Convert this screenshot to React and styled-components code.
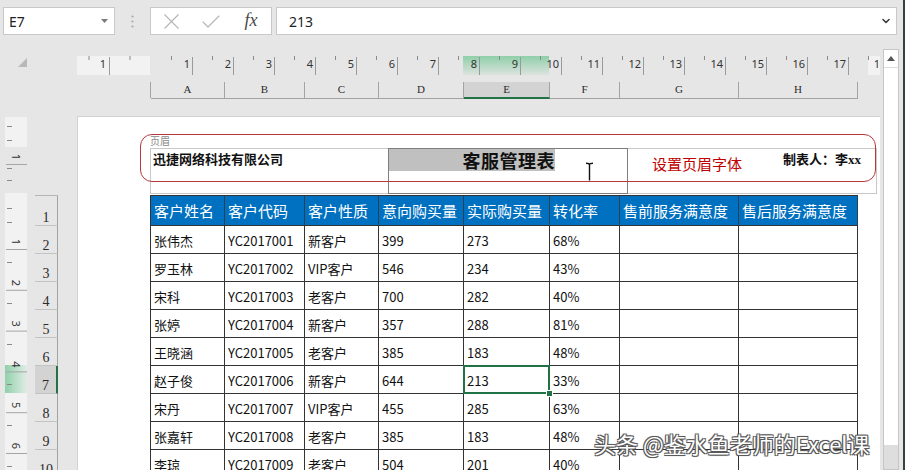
import React from "react";
import styled, { createGlobalStyle } from "styled-components";
import { X, Check, ChevronDown } from "lucide-react";

const COLS = "74px 80px 74px 85px 86px 70px 119px 119px";
const LETTERS = ["A", "B", "C", "D", "E", "F", "G", "H"];
const HEADERS = ["客户姓名", "客户代码", "客户性质", "意向购买量", "实际购买量", "转化率", "售前服务满意度", "售后服务满意度"];
const ROWS = [
    ["张伟杰", "YC2017001", "新客户", "399", "273", "68%"],
    ["罗玉林", "YC2017002", "VIP客户", "546", "234", "43%"],
    ["宋科", "YC2017003", "老客户", "700", "282", "40%"],
    ["张婷", "YC2017004", "新客户", "357", "288", "81%"],
    ["王晓涵", "YC2017005", "老客户", "385", "183", "48%"],
    ["赵子俊", "YC2017006", "新客户", "644", "213", "33%"],
    ["宋丹", "YC2017007", "VIP客户", "455", "285", "63%"],
    ["张嘉轩", "YC2017008", "老客户", "385", "183", "48%"],
    ["李琼", "YC2017009", "老客户", "504", "201", "40%"],
];

function HorizontalRuler() {
    const full = [];
    for (let n = 1; n <= 17; n++) full.push({ n, x: 74 + 41 * n });
    const half = [12, 53];
    for (let n = 1; n <= 18; n++) half.push(74 + 41 * n - 20.5);

    return (
        <RulerSvg width="803" height="19" viewBox="0 0 803 19">
            <defs>
                <linearGradient id="colSel" x1="0" y1="0" x2="0" y2="1">
                    <stop offset="0" stopColor="#7fcb9e" stopOpacity="0.85" />
                    <stop offset="1" stopColor="#7fcb9e" stopOpacity="0.1" />
                </linearGradient>
            </defs>
            <rect x="0" y="0" width="73" height="19" fill="#f2f2f2" />
            <rect x="791" y="0" width="12" height="19" fill="#f2f2f2" />
            <rect x="386" y="0" width="86" height="19" fill="url(#colSel)" />
            {half.map((x) => (
                <line key={x} x1={x} y1="0" x2={x} y2="4" stroke="#8a8a8a" />
            ))}
            <line x1="32.5" y1="1" x2="32.5" y2="19" stroke="#9a9a9a" />
            <text x="29" y="12" textAnchor="end" fontSize="11" fill="#333">1</text>
            {full.map(({ n, x }) => (
                <g key={n}>
                    <line x1={x + 0.5} y1="1" x2={x + 0.5} y2="19" stroke="#9a9a9a" />
                    <text x={x - 2} y="12" textAnchor="end" fontSize="11" fill="#333">{n}</text>
                </g>
            ))}
            <text x="803" y="12" textAnchor="end" fontSize="11" fill="#333">1</text>
        </RulerSvg>
    );
}

function VerticalRuler() {
    const labels = [];
    for (let n = 1; n <= 6; n++) labels.push({ n, y: 126 + 40.8 * (n - 1) });
    const half = [];
    for (let y = 146; y < 354; y += 40.8) half.push(Math.round(y));

    return (
        <RulerSvg width="22" height="354" viewBox="0 0 22 354">
            <defs>
                <linearGradient id="rowSel" x1="0" y1="0" x2="1" y2="0">
                    <stop offset="0" stopColor="#7fcb9e" stopOpacity="0.85" />
                    <stop offset="1" stopColor="#7fcb9e" stopOpacity="0.15" />
                </linearGradient>
            </defs>
            <rect x="0" y="1" width="22" height="30" fill="#f2f2f2" />
            <rect x="0" y="77" width="22" height="277" fill="#f2f2f2" />
            <rect x="0" y="249" width="22" height="28" fill="url(#rowSel)" />
            {[10, 24, 52, 64, 92, 106].concat(half).map((y) => (
                <line key={y} x1="2" y1={y + 0.5} x2="7" y2={y + 0.5} stroke="#8a8a8a" />
            ))}
            <line x1="1" y1="48.5" x2="22" y2="48.5" stroke="#a5a5a5" />
            <text transform="translate(11 41) rotate(90)" textAnchor="middle" dominantBaseline="central" fontSize="11" fill="#333">1</text>
            {labels.map(({ n, y }) => (
                <g key={n}>
                    <line x1="1" y1={y + 7.5} x2="22" y2={y + 7.5} stroke="#a5a5a5" />
                    <text transform={`translate(11 ${y}) rotate(90)`} textAnchor="middle" dominantBaseline="central" fontSize="11" fill="#333">{n}</text>
                </g>
            ))}
        </RulerSvg>
    );
}

export default function App() {
    return (
        <>
            <GlobalStyle />
            <Window>
                <FormulaBar>
                    <NameBox>
                        <span>E7</span>
                        <SmallIcon width="7" height="4" viewBox="0 0 7 4">
                            <path d="M0 0h7L3.5 4z" fill="#7a7a7a" />
                        </SmallIcon>
                    </NameBox>
                    <Grip>
                        <SmallIcon width="3" height="13" viewBox="0 0 3 13">
                            <circle cx="1.5" cy="1.5" r="1.1" fill="#a8a8a8" />
                            <circle cx="1.5" cy="6.5" r="1.1" fill="#a8a8a8" />
                            <circle cx="1.5" cy="11.5" r="1.1" fill="#a8a8a8" />
                        </SmallIcon>
                    </Grip>
                    <FxGroup>
                        <X size={27} strokeWidth={0.95} color="#b4b4b4" />
                        <Check size={24} strokeWidth={1.1} color="#b4b4b4" />
                        <FxLabel>fx</FxLabel>
                    </FxGroup>
                    <FormulaInput>
                        <span>213</span>
                        <ChevronDown size={12} strokeWidth={3.2} color="#3a3a3a" />
                    </FormulaInput>
                </FormulaBar>

                <Workspace>
                    <Sheet>
                        <TopArea>
                            <Corner>
                                <SmallIcon width="9" height="9" viewBox="0 0 9 9">
                                    <path d="M9 0V9H0z" fill="#b8b8b8" />
                                </SmallIcon>
                            </Corner>
                            <RulerColumn>
                                <HorizontalRuler />
                                <ColumnHeads>
                                    {LETTERS.map((l) => (
                                        <ColumnHead key={l} $active={l === "E"}>{l}</ColumnHead>
                                    ))}
                                </ColumnHeads>
                            </RulerColumn>
                        </TopArea>

                        <Body>
                            <Gutter>
                                <VerticalRuler />
                                <RowHeads>
                                    {Array.from({ length: 10 }, (_, i) => i + 1).map((n) => (
                                        <RowHead key={n} $first={n === 1} $active={n === 7}>{n}</RowHead>
                                    ))}
                                </RowHeads>
                            </Gutter>

                            <Page>
                                <HeaderTag>页眉</HeaderTag>
                                <HeaderBand>
                                    <HeaderLeft>迅捷网络科技有限公司</HeaderLeft>
                                    <HeaderCenter>
                                        <Selection>客服管理表</Selection>
                                        <IBeam width="9" height="20" viewBox="0 0 9 20">
                                            <path d="M1 1.2C3 1.2 4.5 1.6 4.5 2.8C4.5 1.6 6 1.2 8 1.2M4.5 2.8V18.5" stroke="#111" strokeWidth="1.4" fill="none" />
                                        </IBeam>
                                    </HeaderCenter>
                                    <HeaderRight>
                                        <Annotation>设置页眉字体</Annotation>
                                        <Maker>制表人：李<Latin>xx</Latin></Maker>
                                    </HeaderRight>
                                </HeaderBand>
                                <RedFrame />

                                <Table>
                                    {HEADERS.map((h) => (
                                        <HeadCell key={h}>{h}</HeadCell>
                                    ))}
                                    {ROWS.map((row, r) =>
                                        HEADERS.map((_, c) => (
                                            <Cell key={`${r}-${c}`} $selected={r === 5 && c === 4}>
                                                {row[c] || ""}
                                            </Cell>
                                        ))
                                    )}
                                </Table>
                            </Page>
                        </Body>
                    </Sheet>

                    <ScrollBar>
                        <ArrowBox>
                            <SmallIcon width="8" height="5" viewBox="0 0 8 5">
                                <path d="M0 5h8L4 0z" fill="#555" />
                            </SmallIcon>
                        </ArrowBox>
                        <Thumb />
                    </ScrollBar>
                </Workspace>

                <Watermark>头条 @鉴水鱼老师的Excel课</Watermark>
            </Window>
        </>
    );
}

const GlobalStyle = createGlobalStyle`
    html, body {
        margin: 0;
        padding: 0;
        background: #e6e6e6;
    }
    body {
        font-family: "Noto Sans", "Noto Sans CJK SC", sans-serif;
    }
`

const Window = styled.div`
    position: relative;
    width: 905px;
    height: 470px;
    box-sizing: border-box;
    border-right: 2px solid #33453b;
    background: #e6e6e6;
    overflow: hidden;
    display: flex;
    flex-direction: column;
`

const FormulaBar = styled.div`
    display: flex;
    align-items: flex-start;
    height: 42px;
    padding: 7px 0 0 3px;
    box-sizing: border-box;
    flex-shrink: 0;
`

const NameBox = styled.div`
    width: 112px;
    height: 28px;
    box-sizing: border-box;
    border: 1px solid #c9c9c9;
    background: #fff;
    display: flex;
    align-items: center;
    justify-content: space-between;
    padding: 0 6px 0 5px;
    font-size: 14px;
    color: #1f1f1f;
`

const SmallIcon = styled.svg`
    display: block;
    flex-shrink: 0;
`

const Grip = styled.div`
    width: 35px;
    height: 28px;
    display: flex;
    align-items: center;
    justify-content: center;
`

const FxGroup = styled.div`
    width: 122px;
    height: 28px;
    box-sizing: border-box;
    border: 1px solid #c9c9c9;
    background: #fff;
    display: grid;
    grid-template-columns: repeat(3, 40px);
    justify-items: center;
    align-items: center;
`

const FxLabel = styled.span`
    font-family: "Liberation Serif", serif;
    font-style: italic;
    font-size: 18px;
    color: #4a4a4a;
    margin-bottom: 2px;
`

const FormulaInput = styled.div`
    width: 621px;
    height: 28px;
    margin-left: 4px;
    box-sizing: border-box;
    border: 1px solid #c9c9c9;
    background: #fff;
    display: flex;
    align-items: center;
    justify-content: space-between;
    padding: 0 4px 0 12px;
    font-size: 14px;
    color: #1f1f1f;
`

const Workspace = styled.div`
    flex: 1;
    display: flex;
    min-height: 0;
`

const Sheet = styled.div`
    width: 880px;
    display: flex;
    flex-direction: column;
`

const TopArea = styled.div`
    display: flex;
    height: 74px;
    flex-shrink: 0;
`

const Corner = styled.div`
    width: 77px;
    box-sizing: border-box;
    padding: 16px 0 0 18px;
`

const RulerColumn = styled.div`
    flex: 1;
    padding-top: 14px;
    display: flex;
    flex-direction: column;
`

const RulerSvg = styled.svg`
    display: block;
    flex-shrink: 0;
    font-family: "Noto Sans", sans-serif;
`

const ColumnHeads = styled.div`
    display: grid;
    grid-template-columns: ${COLS};
    margin: 7px 0 0 73px;
    height: 16px;
    border-left: 1px solid #a3a3a3;
    width: max-content;
`

const ColumnHead = styled.div`
    box-sizing: border-box;
    border-right: 1px solid #a3a3a3;
    border-bottom: ${(p) => (p.$active ? "2px solid #217346" : "1px solid #a3a3a3")};
    background: ${(p) => (p.$active ? "#d3d3d3" : "transparent")};
    font-family: "Liberation Serif", serif;
    font-size: 11px;
    line-height: 15px;
    text-align: center;
    color: #2b2b2b;
`

const Body = styled.div`
    flex: 1;
    display: flex;
    min-height: 0;
`

const Gutter = styled.div`
    width: 77px;
    display: flex;
    padding-left: 5px;
    box-sizing: border-box;
`

const RowHeads = styled.div`
    margin: 79px 0 0 8px;
    width: 23px;
    border-top: 1px solid #b5b5b5;
    align-self: flex-start;
`

const RowHead = styled.div`
    height: ${(p) => (p.$first ? "30px" : "28px")};
    box-sizing: border-box;
    border-bottom: 1px solid #c3c3c3;
    border-right: ${(p) => (p.$active ? "2px solid #217346" : "1px solid #a3a3a3")};
    background: ${(p) => (p.$active ? "#d3d3d3" : "transparent")};
    display: flex;
    align-items: flex-end;
    justify-content: center;
    font-family: "Liberation Serif", serif;
    font-size: 14px;
    line-height: 13px;
    padding-bottom: 1px;
    color: #2b2b2b;
`

const Page = styled.div`
    position: relative;
    flex: 1;
    background: #fff;
    border-top: 1px solid #d2d2d2;
    border-left: 1px solid #d2d2d2;
    padding: 16px 0 0 72px;
    font-family: "Noto Sans CJK SC", sans-serif;
`

const HeaderTag = styled.div`
    height: 15px;
    font-size: 10px;
    line-height: 15px;
    color: #8a8a8a;
`

const HeaderBand = styled.div`
    display: flex;
    width: 727px;
    height: 46px;
`

const HeaderLeft = styled.div`
    width: 238px;
    box-sizing: border-box;
    border: 1px solid #c8c8c8;
    border-right: none;
    padding: 2px 0 0 2px;
    font-size: 13px;
    font-weight: 700;
    line-height: 16px;
    color: #111;
`

const HeaderCenter = styled.div`
    position: relative;
    width: 240px;
    box-sizing: border-box;
    border: 1px solid #7e7e7e;
`

const Selection = styled.div`
    width: 166px;
    height: 22px;
    background: #c0c0c0;
    text-align: right;
    font-size: 18px;
    font-weight: 700;
    line-height: 22px;
    letter-spacing: 0.5px;
    color: #111;
`

const IBeam = styled.svg`
    position: absolute;
    left: 196px;
    top: 13px;
`

const HeaderRight = styled.div`
    flex: 1;
    box-sizing: border-box;
    border: 1px solid #c8c8c8;
    border-left: none;
    display: flex;
    align-items: flex-start;
    padding-left: 24px;
`

const Annotation = styled.div`
    margin-top: 6px;
    font-size: 15px;
    line-height: 18px;
    color: #c00000;
`

const Maker = styled.div`
    margin: 2px 0 0 41px;
    font-size: 13px;
    font-weight: 700;
    line-height: 16px;
    color: #111;
`

const Latin = styled.span`
    font-family: "Liberation Serif", serif;
    font-size: 13px;
`

const RedFrame = styled.div`
    position: absolute;
    left: 62px;
    top: 17px;
    width: 736px;
    height: 48px;
    box-sizing: border-box;
    border: 1px solid #b8383d;
    border-radius: 12px;
    pointer-events: none;
`

const Table = styled.div`
    display: grid;
    grid-template-columns: ${COLS};
    width: max-content;
    margin-top: 1px;
    border-top: 1px solid #333;
    border-left: 1px solid #333;
`

const HeadCell = styled.div`
    height: 30px;
    box-sizing: border-box;
    background: #0070c0;
    border-right: 1px solid #2b3f55;
    border-bottom: 1px solid #333;
    padding: 0 3px;
    display: flex;
    align-items: center;
    font-size: 15px;
    color: #fff;
    white-space: nowrap;
`

const Cell = styled.div`
    position: relative;
    height: 28px;
    box-sizing: border-box;
    border-right: 1px solid #333;
    border-bottom: 1px solid #333;
    padding: 1px 3px 0;
    display: flex;
    align-items: center;
    font-size: 13px;
    color: #111;
    white-space: nowrap;

    ${(p) => p.$selected && `
        &::after {
            content: "";
            position: absolute;
            left: -1px;
            top: -1px;
            right: -1px;
            bottom: -1px;
            border: 2px solid #217346;
        }
        &::before {
            content: "";
            position: absolute;
            right: -4px;
            bottom: -4px;
            width: 5px;
            height: 5px;
            background: #217346;
            border: 1px solid #fff;
            z-index: 1;
        }
    `}
`

const ScrollBar = styled.div`
    width: 16px;
    margin: 7px 0 0 3px;
    box-sizing: border-box;
    border: 1px solid #c6c6c6;
    background: #fff;
    display: flex;
    flex-direction: column;
`

const ArrowBox = styled.div`
    height: 17px;
    display: flex;
    align-items: center;
    justify-content: center;
    border-bottom: 1px solid #dcdcdc;
`

const Thumb = styled.div`
    margin-top: auto;
    height: 24px;
    background: #dedede;
`

const Watermark = styled.div`
    position: absolute;
    left: 594px;
    top: 430px;
    font-family: "Noto Sans CJK SC", sans-serif;
    font-size: 22px;
    line-height: 26px;
    color: #fff;
    white-space: nowrap;
    text-shadow: 1px 1px 0 #5a5a5a, -1px -1px 0 #5a5a5a, 1px -1px 0 #5a5a5a, -1px 1px 0 #5a5a5a, 0 0 2px #333;
`
